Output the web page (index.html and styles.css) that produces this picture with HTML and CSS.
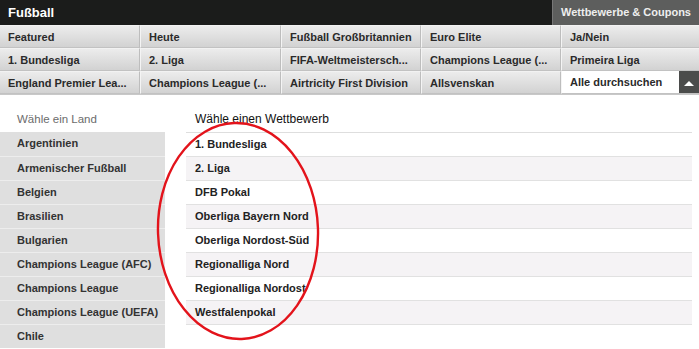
FILE: index.html
```html
<!DOCTYPE html>
<html lang="de">
<head>
<meta charset="utf-8">
<link rel="stylesheet" href="styles.css">
</head>
<body>
<div class="page">
  <header class="topbar">
    <div class="title">Fußball</div>
    <div class="coupons">Wettbewerbe &amp; Coupons</div>
  </header>
  <nav class="tabs">
    <div class="tab">Featured</div>
    <div class="tab">Heute</div>
    <div class="tab">Fußball Großbritannien</div>
    <div class="tab">Euro Elite</div>
    <div class="tab">Ja/Nein</div>
    <div class="tab">1. Bundesliga</div>
    <div class="tab">2. Liga</div>
    <div class="tab">FIFA-Weltmeistersch...</div>
    <div class="tab">Champions League (...</div>
    <div class="tab">Primeira Liga</div>
    <div class="tab">England Premier Lea...</div>
    <div class="tab">Champions League (...</div>
    <div class="tab">Airtricity First Division</div>
    <div class="tab">Allsvenskan</div>
    <div class="tab tab-search">
      <span class="search-label">Alle durchsuchen</span>
      <span class="toggle"><svg width="10" height="6" viewBox="0 0 10 6"><path d="M0 6 L5 1 L10 6 Z" fill="#fff"/></svg></span>
    </div>
  </nav>
  <main class="content">
    <section class="countries">
      <div class="col-head muted">Wähle ein Land</div>
      <ul class="country-list">
        <li>Argentinien</li>
        <li>Armenischer Fußball</li>
        <li>Belgien</li>
        <li>Brasilien</li>
        <li>Bulgarien</li>
        <li>Champions League (AFC)</li>
        <li>Champions League</li>
        <li>Champions League (UEFA)</li>
        <li>Chile</li>
      </ul>
    </section>
    <section class="competitions">
      <div class="col-head comp-head">Wähle einen Wettbewerb</div>
      <ul class="comp-list">
        <li>1. Bundesliga</li>
        <li>2. Liga</li>
        <li>DFB Pokal</li>
        <li>Oberliga Bayern Nord</li>
        <li>Oberliga Nordost-Süd</li>
        <li>Regionalliga Nord</li>
        <li>Regionalliga Nordost</li>
        <li>Westfalenpokal</li>
      </ul>
    </section>
    <svg class="circle" width="699" height="349" viewBox="0 0 699 349">
      <ellipse cx="238" cy="231" rx="80" ry="108" fill="none" stroke="#e3131b" stroke-width="2.4" transform="rotate(-2 238 231)"/>
    </svg>
  </main>
</div>
</body>
</html>
```

FILE: styles.css
```css
* { box-sizing: border-box; }
html, body { margin: 0; padding: 0; background: #fff; }
body {
  font-family: "Liberation Sans", Arial, sans-serif;
  font-size: 11px;
  color: #2a2a2a;
  width: 699px;
  height: 349px;
  overflow: hidden;
}
ul { list-style: none; margin: 0; padding: 0; }

.page { position: relative; width: 699px; }

.topbar {
  display: flex;
  justify-content: space-between;
  align-items: stretch;
  height: 25px;
  background: #1b1c1b;
}
.title {
  color: #fff;
  font-weight: bold;
  font-size: 13px;
  line-height: 25px;
  padding-left: 8px;
}
.coupons {
  width: 147px;
  background: #5d5e5d;
  color: #eee;
  font-weight: bold;
  font-size: 11px;
  line-height: 25px;
  text-align: center;
  border-left: 1px solid #777;
}

.tabs {
  display: grid;
  grid-template-columns: 140px 141px 140px 140px 138px;
  background: #b5b5b5;
  border-bottom: 1px solid #c8c8c8;
}
.tab {
  height: 23px;
  line-height: 22px;
  padding-left: 8px;
  font-weight: bold;
  font-size: 11px;
  color: #2a2a2a;
  white-space: nowrap;
  overflow: hidden;
  background: linear-gradient(#ececec, #d2d2d2);
  border-right: 1px solid #bdbdbd;
  border-left: 1px solid #f4f4f4;
  border-bottom: 1px solid #c2c2c2;
  border-top: 1px solid #f2f2f2;
}
.tab:nth-child(5n+1) { border-left: 0; }
.tab:nth-child(5n) { border-right: 0; }
.tab-search {
  display: flex;
  justify-content: space-between;
  padding-right: 0;
  background: #fff;
  border-top: 0;
}
.search-label { line-height: 23px; }
.toggle {
  width: 20px;
  height: 23px;
  background: #4b4c4b;
  display: flex;
  align-items: center;
  justify-content: center;
}

.content {
  display: flex;
  align-items: flex-start;
  gap: 21px;
}
.countries { width: 165px; }
.col-head {
  height: 37px;
  line-height: 12px;
  padding-top: 18px;
  font-size: 11.5px;
}
.muted { color: #6c6c6c; padding-left: 17px; }
.country-list li {
  height: 24px;
  line-height: 23px;
  padding-left: 17px;
  background: #dfdfdf;
  border-top: 1px solid #ededed;
  font-weight: bold;
  color: #333;
  white-space: nowrap;
}
.country-list li:first-child { border-top: 0; }

.competitions { width: 506px; }
.comp-head {
  height: 38px;
  padding-left: 9px;
  color: #111;
  font-size: 12px;
  border-bottom: 1px solid #dedede;
}
.comp-list li {
  height: 24px;
  line-height: 23px;
  padding-left: 9px;
  font-weight: bold;
  color: #222;
  border-bottom: 1px solid #e1e1e1;
}
.comp-list li:nth-child(even) { background: #f5f3f5; }

.circle {
  position: absolute;
  left: 0;
  top: 0;
  pointer-events: none;
}
```
